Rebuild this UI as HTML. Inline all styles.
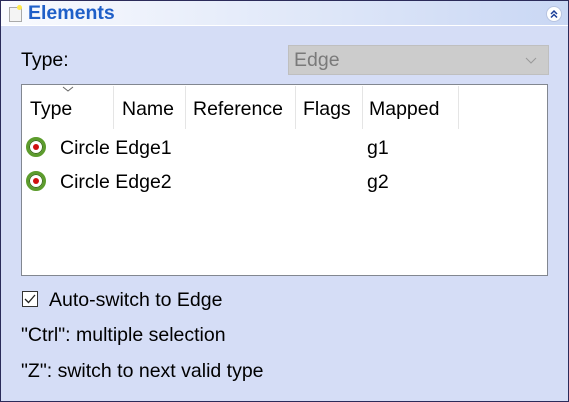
<!DOCTYPE html>
<html><head><style>
body{margin:0;width:569px;height:402px;overflow:hidden;font-family:"Liberation Sans",sans-serif;}
.win{position:absolute;left:0;top:0;width:567px;height:400px;border:1px solid #2b2b5a;background:#d5ddf6;}
.hdr{position:absolute;left:0;top:0;width:567px;height:24px;background:linear-gradient(90deg,#fafbfe,#c9d7f4);border-bottom:1px solid #fff;}
.t{position:absolute;font-size:19.5px;color:#000;white-space:nowrap;}
.col{position:absolute;top:1px;height:43px;width:1px;background:#e5e5e5;}
.ic{position:absolute;width:14px;height:14px;border:3px solid #5c9c2c;border-radius:50%;background:#fff;box-shadow:0 0 0 1px #3c6e1a inset;}
.ic::after{content:"";position:absolute;left:4px;top:4px;width:6px;height:6px;border-radius:50%;background:#d01010;}
</style></head><body>
<div class="win">
<div class="hdr">
 <div style="position:absolute;left:8px;top:6px;width:11px;height:13px;background:#f4f4f4;border:1px solid #aaa"></div>
 <div style="position:absolute;left:16px;top:4px;width:5px;height:5px;border-radius:50%;background:#ffe94a"></div>
 <div class="t" style="left:27px;top:1px;font-weight:bold;color:#1f5fc8;font-size:19.5px">Elements</div>
 <svg style="position:absolute;left:545px;top:5px" width="16" height="16"><circle cx="8" cy="8" r="7.5" fill="#fff" stroke="#b8c4e0"/><path d="M5 8 L8 5 L11 8 M5 11.5 L8 8.5 L11 11.5" stroke="#1b3f99" stroke-width="1.5" fill="none"/></svg>
</div>
<div class="t" style="left:20px;top:48px">Type:</div>
<div style="position:absolute;left:287px;top:44px;width:259px;height:28px;background:#cccccc;border:1px solid #bfbfbf"></div>
<div class="t" style="left:293px;top:48px;color:#7a7a7a">Edge</div>
<svg style="position:absolute;left:524px;top:56px" width="12" height="8"><path d="M1 1 L6 6 L11 1" stroke="#999" fill="none"/></svg>
<div style="position:absolute;left:20px;top:83px;width:525px;height:190px;background:#fff;border:1px solid #828790">
 <svg style="position:absolute;left:40px;top:1px" width="12" height="6"><path d="M1 1 L6 5 L11 1" stroke="#666" fill="none"/></svg>
 <div class="col" style="left:91px"></div><div class="col" style="left:163px"></div><div class="col" style="left:273px"></div><div class="col" style="left:340px"></div><div class="col" style="left:436px"></div>
 <div class="t" style="left:8px;top:13px">Type</div>
 <div class="t" style="left:100px;top:13px">Name</div>
 <div class="t" style="left:171px;top:13px">Reference</div>
 <div class="t" style="left:281px;top:13px">Flags</div>
 <div class="t" style="left:347px;top:13px">Mapped</div>
 <div class="ic" style="left:4px;top:52px"></div>
 <div class="t" style="left:38px;top:52px">Circle Edge1</div>
 <div class="t" style="left:345px;top:52px">g1</div>
 <div class="ic" style="left:4px;top:86px"></div>
 <div class="t" style="left:38px;top:86px">Circle Edge2</div>
 <div class="t" style="left:345px;top:86px">g2</div>
</div>
<div style="position:absolute;left:21px;top:290px;width:14px;height:14px;background:#fff;border:1px solid #333"></div>
<svg style="position:absolute;left:23px;top:292px" width="12" height="12"><path d="M1 6 L4.5 9.5 L11 2" stroke="#222" stroke-width="1.3" fill="none"/></svg>
<div class="t" style="left:48px;top:288px">Auto-switch to Edge</div>
<div class="t" style="left:20px;top:323px">"Ctrl": multiple selection</div>
<div class="t" style="left:20px;top:359px">"Z": switch to next valid type</div>
</div>
</body></html>
